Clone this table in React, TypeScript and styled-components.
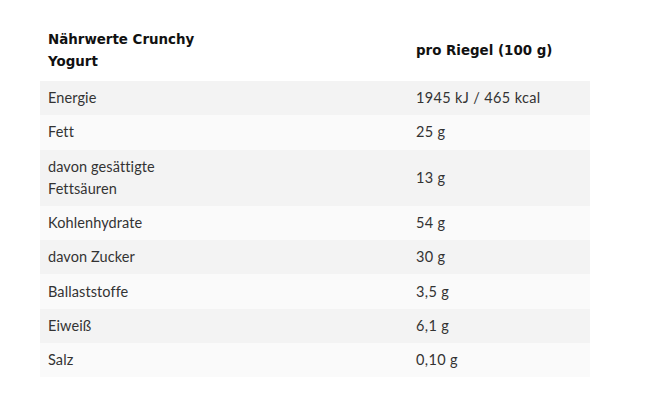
import React from "react";
import styled, { createGlobalStyle } from "styled-components";

const GlobalStyle = createGlobalStyle`
  body {
    margin: 0;
    background: #ffffff;
  }
`;

const Page = styled.div`
  padding: 21px 0 0 40px;
`;

const Table = styled.table`
  width: 550px;
  border-collapse: collapse;
  font-family: "Lato", "Open Sans", sans-serif;
  font-size: 14.5px;
  letter-spacing: 0.1px;
  color: #333333;
`;

const HeadCell = styled.th<{ $wide?: boolean }>`
  width: ${(p) => (p.$wide ? "352px" : "auto")};
  padding: 8px 8px;
  text-align: left;
  vertical-align: middle;
  font-family: "DejaVu Sans", "Liberation Sans", sans-serif;
  font-weight: 700;
  font-size: 13.4px;
  letter-spacing: 0;
  line-height: 22px;
  color: #111111;
`;

const Row = styled.tr<{ $shaded: boolean }>`
  background: ${(p) => (p.$shaded ? "#f3f3f3" : "#fafafa")};
`;

const Cell = styled.td<{ $value?: boolean }>`
  padding: 6.15px 8px;
  line-height: 22px;
  vertical-align: middle;
  letter-spacing: ${(p) => (p.$value ? "0.35px" : "0.1px")};
`;

const LabelText = styled.span<{ $max: number }>`
  display: block;
  max-width: ${(p) => p.$max}px;
`;

const rows: [string, string][] = [
  ["Energie", "1945 kJ / 465 kcal"],
  ["Fett", "25 g"],
  ["davon gesättigte Fettsäuren", "13 g"],
  ["Kohlenhydrate", "54 g"],
  ["davon Zucker", "30 g"],
  ["Ballaststoffe", "3,5 g"],
  ["Eiweiß", "6,1 g"],
  ["Salz", "0,10 g"],
];

const App = () => {
  return (
    <>
      <GlobalStyle />
      <Page>
        <Table>
          <thead>
            <tr>
              <HeadCell $wide>
                <LabelText $max={165}>Nährwerte Crunchy Yogurt</LabelText>
              </HeadCell>
              <HeadCell>pro Riegel (100 g)</HeadCell>
            </tr>
          </thead>
          <tbody>
            {rows.map(([label, value], i) => (
              <Row key={label} $shaded={i % 2 === 0}>
                <Cell>
                  <LabelText $max={120}>{label}</LabelText>
                </Cell>
                <Cell $value>{value}</Cell>
              </Row>
            ))}
          </tbody>
        </Table>
      </Page>
    </>
  );
};

export default App;
